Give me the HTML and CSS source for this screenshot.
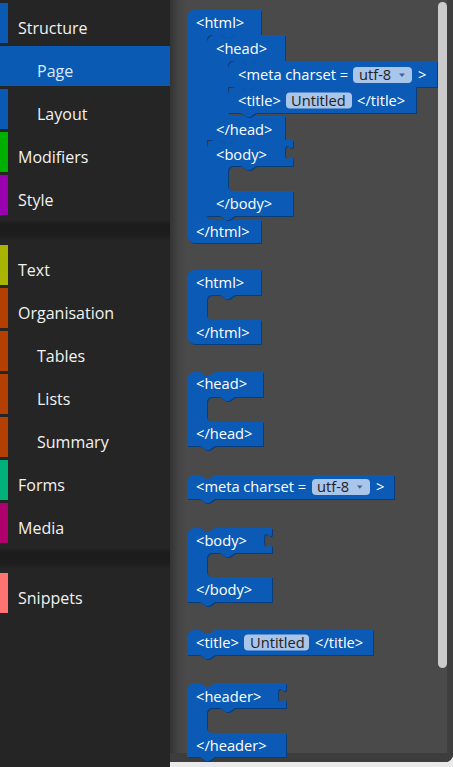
FILE: index.html
```html
<!DOCTYPE html>
<html>
<head>
<meta charset="utf-8">
<link rel="stylesheet" href="styles.css">
</head>
<body>
<div class="app">
  <nav class="toolbox">
    <div class="cat"><span class="bar c-struct"></span><span class="lbl">Structure</span></div>
    <div class="cat sub sel"><span class="bar c-struct"></span><span class="lbl">Page</span></div>
    <div class="cat sub"><span class="bar c-struct"></span><span class="lbl">Layout</span></div>
    <div class="cat"><span class="bar c-mod"></span><span class="lbl">Modifiers</span></div>
    <div class="cat"><span class="bar c-style"></span><span class="lbl">Style</span></div>
    <div class="sep"></div>
    <div class="cat"><span class="bar c-text"></span><span class="lbl">Text</span></div>
    <div class="cat"><span class="bar c-org"></span><span class="lbl">Organisation</span></div>
    <div class="cat sub"><span class="bar c-org"></span><span class="lbl">Tables</span></div>
    <div class="cat sub"><span class="bar c-org"></span><span class="lbl">Lists</span></div>
    <div class="cat sub"><span class="bar c-org"></span><span class="lbl">Summary</span></div>
    <div class="cat"><span class="bar c-forms"></span><span class="lbl">Forms</span></div>
    <div class="cat"><span class="bar c-media"></span><span class="lbl">Media</span></div>
    <div class="sep"></div>
    <div class="cat"><span class="bar c-snip"></span><span class="lbl">Snippets</span></div>
  </nav>
  <div class="flyout">
    <div class="panel">
      <svg class="canvas" width="283" height="762" viewBox="170 0 283 762" xmlns="http://www.w3.org/2000/svg">
        <!-- compound html block -->
        <g class="blk">
          <path d="M187,18 a8,8 0 0 1 8,-8 H261 V35 H235 l-6,4 -3,0 -6,-4 H212 a5,5 0 0 0 -5,5 V215 a5,5 0 0 0 5,5 H261 V243 H195 a8,8 0 0 1 -8,-8 Z"/>
          <text class="t" x="196" y="28">&lt;html&gt;</text>
          <text class="t" x="196" y="237">&lt;/html&gt;</text>
        </g>
        <g class="blk">
          <path d="M207,43 a8,8 0 0 1 8,-8 H220 l6,4 3,0 6,-4 H285 V61 H256 l-6,4 -3,0 -6,-4 H233 a5,5 0 0 0 -5,5 V111 a5,5 0 0 0 5,5 H285 V140 H235 l-6,4 -3,0 -6,-4 H207 Z"/>
          <text class="t" x="216" y="54">&lt;head&gt;</text>
          <text class="t" x="216" y="135">&lt;/head&gt;</text>
        </g>
        <g class="blk">
          <path d="M228,69 a8,8 0 0 1 8,-8 H241 l6,4 3,0 6,-4 H437 V87 H256 l-6,4 -3,0 -6,-4 H228 Z"/>
          <text class="t" x="238" y="80">&lt;meta charset =</text>
          <rect class="fld" x="353" y="67" width="59" height="16" rx="4"/>
          <text class="ft" x="359" y="80">utf-8</text>
          <path class="arr" d="M399,73.5 h6 l-3,3.5 z"/>
          <text class="t" x="418" y="80">&gt;</text>
        </g>
        <g class="blk">
          <path d="M228,95 a8,8 0 0 1 8,-8 H241 l6,4 3,0 6,-4 H416 V113 H256 l-6,4 -3,0 -6,-4 H228 Z"/>
          <text class="t" x="238" y="106">&lt;title&gt;</text>
          <rect class="fld" x="286" y="92.5" width="66" height="16" rx="4"/>
          <text class="ft" x="291" y="106">Untitled</text>
          <text class="t" x="357" y="106">&lt;/title&gt;</text>
        </g>
        <g class="blk">
          <path d="M207,148 a8,8 0 0 1 8,-8 H220 l6,4 3,0 6,-4 H293 V145 c0,10 -8,-8 -8,7.5 s8,-2.5 8,7.5 V166 H256 l-6,4 -3,0 -6,-4 H233 a5,5 0 0 0 -5,5 V186 a5,5 0 0 0 5,5 H293 V216 H235 l-6,4 -3,0 -6,-4 H207 Z"/>
          <text class="t" x="216" y="160">&lt;body&gt;</text>
          <text class="t" x="216" y="209">&lt;/body&gt;</text>
        </g>

        <!-- standalone html -->
        <g class="blk">
          <path d="M187,278 a8,8 0 0 1 8,-8 H261 V295 H235 l-6,4 -3,0 -6,-4 H212 a5,5 0 0 0 -5,5 V315 a5,5 0 0 0 5,5 H261 V344 H195 a8,8 0 0 1 -8,-8 Z"/>
          <text class="t" x="196" y="288">&lt;html&gt;</text>
          <text class="t" x="196" y="338">&lt;/html&gt;</text>
        </g>
        <!-- head -->
        <g class="blk">
          <path d="M187,380 a8,8 0 0 1 8,-8 H200 l6,4 3,0 6,-4 H263 V397 H235 l-6,4 -3,0 -6,-4 H212 a5,5 0 0 0 -5,5 V417 a5,5 0 0 0 5,5 H263 V446 H215 l-6,4 -3,0 -6,-4 H187 Z"/>
          <text class="t" x="196" y="389">&lt;head&gt;</text>
          <text class="t" x="196" y="439">&lt;/head&gt;</text>
        </g>
        <!-- meta -->
        <g class="blk">
          <path d="M187,483 a8,8 0 0 1 8,-8 H200 l6,4 3,0 6,-4 H394 V499 H215 l-6,4 -3,0 -6,-4 H187 Z"/>
          <text class="t" x="196" y="492">&lt;meta charset =</text>
          <rect class="fld" x="312" y="479" width="58" height="16" rx="4"/>
          <text class="ft" x="317" y="492">utf-8</text>
          <path class="arr" d="M357,485.5 h5.5 l-2.75,3.2 z"/>
          <text class="t" x="376" y="492">&gt;</text>
        </g>
        <!-- body -->
        <g class="blk">
          <path d="M187,536 a8,8 0 0 1 8,-8 H200 l6,4 3,0 6,-4 H272 V533 c0,10 -8,-8 -8,7.5 s8,-2.5 8,7.5 V553 H235 l-6,4 -3,0 -6,-4 H212 a5,5 0 0 0 -5,5 V572 a5,5 0 0 0 5,5 H272 V602 H215 l-6,4 -3,0 -6,-4 H187 Z"/>
          <text class="t" x="196" y="546">&lt;body&gt;</text>
          <text class="t" x="196" y="595">&lt;/body&gt;</text>
        </g>
        <!-- title -->
        <g class="blk">
          <path d="M187,638 a8,8 0 0 1 8,-8 H200 l6,4 3,0 6,-4 H373 V655 H215 l-6,4 -3,0 -6,-4 H187 Z"/>
          <text class="t" x="196" y="648">&lt;title&gt;</text>
          <rect class="fld" x="244" y="634.5" width="65" height="16" rx="4"/>
          <text class="ft" x="250" y="648">Untitled</text>
          <text class="t" x="315" y="648">&lt;/title&gt;</text>
        </g>
        <!-- header -->
        <g class="blk">
          <path d="M187,691 a8,8 0 0 1 8,-8 H200 l6,4 3,0 6,-4 H286 V688 c0,10 -8,-8 -8,7.5 s8,-2.5 8,7.5 V708 H235 l-6,4 -3,0 -6,-4 H212 a5,5 0 0 0 -5,5 V728 a5,5 0 0 0 5,5 H286 V757 H215 l-6,4 -3,0 -6,-4 H187 Z"/>
          <text class="t" x="196" y="702">&lt;header&gt;</text>
          <text class="t" x="196" y="751">&lt;/header&gt;</text>
        </g>
      </svg>
      <div class="scroll"></div>
    </div>
  </div>
</div>
</body>
</html>
```
FILE: styles.css
```css
html, body {
  margin: 0;
  padding: 0;
  background: #e9e9e9;
}
.app {
  display: flex;
  width: 453px;
  height: 767px;
  overflow: hidden;
  font-family: "Open Sans", "Noto Sans", sans-serif;
}
.toolbox {
  width: 170px;
  flex: none;
  height: 767px;
  background: #252525;
  padding-top: 3px;
  box-sizing: border-box;
}
.cat {
  display: flex;
  height: 40px;
  margin-bottom: 3px;
}
.bar {
  width: 8px;
  flex: none;
  height: 100%;
}
.lbl {
  display: flex;
  align-items: center;
  padding-top: 9px;
  box-sizing: border-box;
  padding-left: 10px;
  color: #f2f2f2;
  font-size: 16px;
}
.sub .lbl {
  padding-left: 29px;
}
.sel {
  background: #0a5ab4;
}
.sel .lbl {
  color: #d7eaff;
}
.c-struct { background: #0a5ab4; }
.c-mod { background: #00b000; }
.c-style { background: #9a00b0; }
.c-text { background: #a8b400; }
.c-org { background: #b34000; }
.c-forms { background: #00b07a; }
.c-media { background: #b0006b; }
.c-snip { background: #ff7373; }
.sep {
  height: 27px;
  background: linear-gradient(to bottom, rgba(0,0,0,0) 2px, #1b1b1b 7px, #1d1d1d 17px, rgba(0,0,0,0) 23px);
}
.flyout {
  flex: 1;
  height: 767px;
}
.panel {
  position: relative;
  height: 762px;
  background: linear-gradient(to right, #333333 0, #434343 8px, #4a4a4a 16px);
  border-bottom-right-radius: 8px;
  box-shadow: inset -6px 0 0 #3e3e3e, inset 0 -9px 0 #3d3d3d;
  overflow: hidden;
}
.canvas {
  display: block;
}
.blk path {
  fill: #0b5bb6;
  filter: drop-shadow(1px 1px 0 #073d7c);
}
.blk path.arr {
  fill: #3d629c;
  filter: none;
}
.t {
  font-family: "Open Sans", sans-serif;
  font-size: 11pt;
  fill: #ffffff;
}
.fld {
  fill: #a9c5ea;
}
.ft {
  font-family: "Open Sans", sans-serif;
  font-size: 11pt;
  fill: #222222;
}
.scroll {
  position: absolute;
  top: 2px;
  right: 6px;
  width: 9px;
  height: 666px;
  border-radius: 5px;
  background: #cbcbcb;
}
```
